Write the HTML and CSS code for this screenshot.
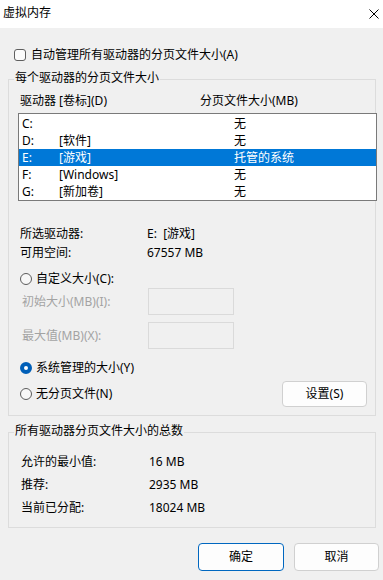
FILE: index.html
```html
<!DOCTYPE html>
<html lang="zh-CN">
<head>
<meta charset="utf-8">
<title>虚拟内存</title>
<link rel="stylesheet" href="styles.css">
</head>
<body>
<div class="titlebar">
  <span class="title">虚拟内存</span>
  <svg class="close" width="10" height="10" viewBox="0 0 10 10"><path d="M0.5 0.5L9.5 9.5M9.5 0.5L0.5 9.5" stroke="#000" stroke-width="1"/></svg>
</div>

<div class="auto">
  <span class="checkbox"></span>
  <span>自动管理所有驱动器的分页文件大小(A)</span>
</div>

<div class="group g1">
  <span class="legend">每个驱动器的分页文件大小</span>
  <div class="hdr"><span class="hc1">驱动器 [卷标](D)</span><span>分页文件大小(MB)</span></div>
  <div class="list">
    <div class="row"><span class="c1">C:</span><span class="c2"></span><span>无</span></div>
    <div class="row"><span class="c1">D:</span><span class="c2">[软件]</span><span>无</span></div>
    <div class="row sel"><span class="c1">E:</span><span class="c2">[游戏]</span><span>托管的系统</span></div>
    <div class="row"><span class="c1">F:</span><span class="c2">[Windows]</span><span>无</span></div>
    <div class="row"><span class="c1">G:</span><span class="c2">[新加卷]</span><span>无</span></div>
  </div>
  <div class="info">
    <div class="irow"><span class="ic1">所选驱动器:</span><span>E:&nbsp;&nbsp;[游戏]</span></div>
    <div class="irow"><span class="ic1">可用空间:</span><span>67557 MB</span></div>
  </div>
  <div class="radio-row r-custom"><span class="radio"></span><span>自定义大小(C):</span></div>
  <div class="field f1"><span class="flabel">初始大小(MB)(I):</span><span class="input"></span></div>
  <div class="field f2"><span class="flabel">最大值(MB)(X):</span><span class="input"></span></div>
  <div class="radio-row r-sys"><span class="radio on"></span><span>系统管理的大小(Y)</span></div>
  <div class="last-row">
    <span class="radio"></span><span class="rtext">无分页文件(N)</span>
    <button class="btn set">设置(S)</button>
  </div>
</div>

<div class="group g2">
  <span class="legend">所有驱动器分页文件大小的总数</span>
  <div class="trow"><span class="tc1">允许的最小值:</span><span>16 MB</span></div>
  <div class="trow"><span class="tc1">推荐:</span><span>2935 MB</span></div>
  <div class="trow"><span class="tc1">当前已分配:</span><span>18024 MB</span></div>
</div>

<div class="actions">
  <button class="btn ok">确定</button>
  <button class="btn cancel">取消</button>
</div>
</body>
</html>
```
FILE: styles.css
```css
html, body {
  margin: 0;
  padding: 0;
}
body {
  width: 383px;
  height: 580px;
  overflow: hidden;
  background: #f0f0f0;
  color: #000;
  font-family: "Noto Sans", "Noto Sans CJK SC", sans-serif;
  font-size: 12px;
  line-height: 16px;
}
.titlebar {
  height: 28px;
  background: #fff;
  display: flex;
  align-items: center;
  justify-content: space-between;
  padding: 0 4px 2px 3px;
  box-sizing: border-box;
}
.close {
  display: block;
  margin-top: 1px;
}
.auto {
  display: flex;
  align-items: center;
  gap: 5px;
  height: 16px;
  margin: 19px 0 0 14px;
}
.checkbox {
  width: 12px;
  height: 12px;
  box-sizing: border-box;
  border: 1px solid #5f5f5f;
  border-radius: 3px;
  background: #fbfbfb;
}
.group {
  position: relative;
  margin-left: 8px;
  width: 368px;
  box-sizing: border-box;
  border: 1px solid #dcdcdc;
}
.g1 {
  margin-top: 16px;
  height: 337px;
}
.g2 {
  margin-top: 16px;
  height: 96px;
  padding-top: 17px;
}
.legend {
  position: absolute;
  top: -10px;
  left: 5px;
  padding: 0 1px;
  background: #f0f0f0;
  line-height: 16px;
}
.hdr {
  display: flex;
  margin-top: 13px;
  padding-left: 11px;
  height: 16px;
}
.hc1 {
  width: 180px;
}
.list {
  margin: 4px 0 0 9px;
  width: 359px;
  height: 88px;
  box-sizing: border-box;
  border: 1px solid #7a7a7a;
  background: #fff;
  padding-top: 1px;
}
.row {
  display: flex;
  height: 17px;
  line-height: 17px;
  padding-left: 3px;
}
.row.sel {
  background: #0078d7;
  color: #fff;
}
.c1 {
  width: 37px;
}
.c2 {
  width: 175px;
}
.info {
  margin-top: 23px;
}
.irow {
  display: flex;
  height: 19px;
  line-height: 19px;
  padding-left: 11px;
}
.ic1 {
  width: 127px;
}
.radio-row {
  display: flex;
  align-items: center;
  gap: 4px;
  height: 16px;
  padding-left: 11px;
}
.r-custom {
  margin-top: 9px;
}
.r-sys {
  margin-top: 11px;
}
.radio {
  width: 12px;
  height: 12px;
  box-sizing: border-box;
  border: 1px solid #5c5c5c;
  border-radius: 50%;
  background: #f7f7f7;
  flex: none;
}
.radio.on {
  border: 4px solid #005fb8;
  background: #fff;
}
.field {
  display: flex;
  align-items: center;
  height: 27px;
  padding-left: 13px;
  color: #a3a3a3;
}
.f1 {
  margin-top: 1px;
}
.f2 {
  margin-top: 7px;
}
.flabel {
  width: 126px;
}
.input {
  width: 86px;
  height: 27px;
  box-sizing: border-box;
  border: 1px solid #dadada;
}
.last-row {
  display: flex;
  align-items: center;
  height: 26px;
  margin-top: 5px;
  padding-left: 11px;
  padding-right: 8px;
}
.rtext {
  margin-left: 4px;
}
.btn {
  font: inherit;
  color: #000;
  background: #fdfdfd;
  border: 1px solid #d0d0d0;
  border-radius: 4px;
  padding: 0;
  box-sizing: border-box;
}
.set {
  margin-left: auto;
  width: 85px;
  height: 26px;
}
.trow {
  display: flex;
  height: 23px;
  line-height: 23px;
  padding-left: 12px;
}
.tc1 {
  width: 128px;
}
.actions {
  display: flex;
  justify-content: flex-end;
  gap: 10px;
  margin-top: 15px;
  padding-right: 4px;
}
.actions .btn {
  height: 28px;
}
.ok {
  width: 86px;
  border-color: #0067c0;
}
.cancel {
  width: 85px;
}
```
